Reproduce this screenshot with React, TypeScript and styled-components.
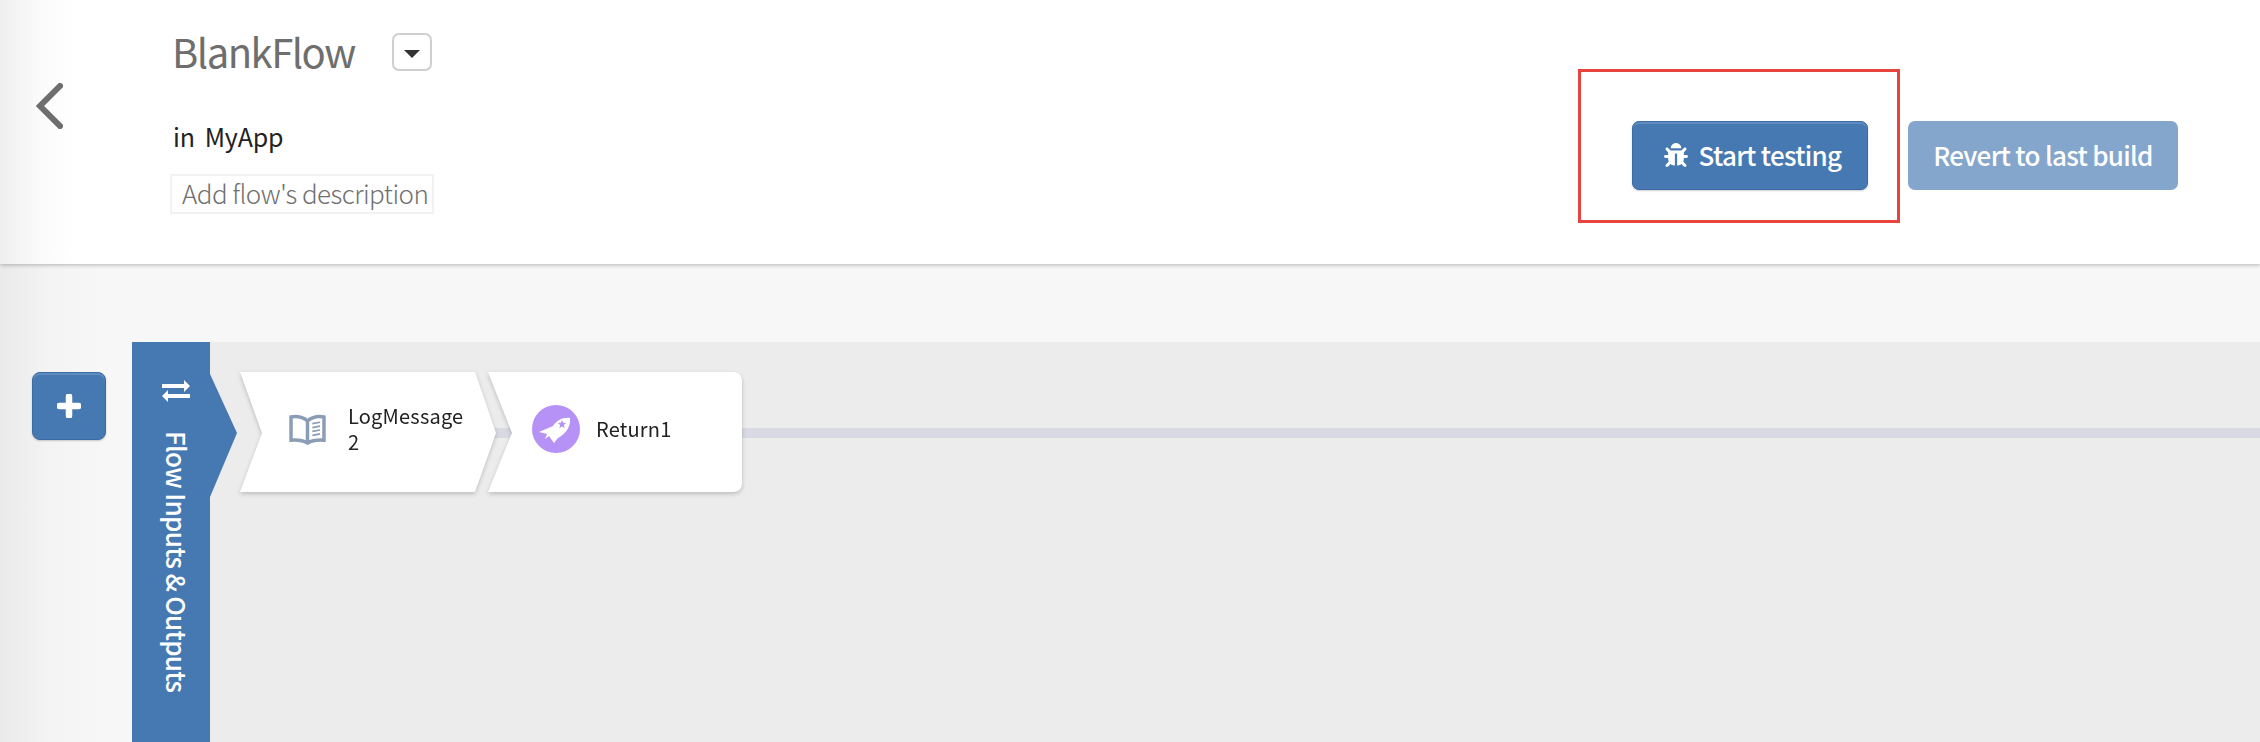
import React from "react";
import styled, { createGlobalStyle } from "styled-components";
import { FaBug } from "react-icons/fa";

const Global = createGlobalStyle`
  html, body { margin: 0; padding: 0; background: #fff; }
  body { font-family: "Noto Sans CJK JP", "Noto Sans", sans-serif; overflow: hidden; }
`;
const Page = styled.div`
  width: 2260px; height: 742px; display: flex; flex-direction: column; overflow: hidden;
`;
const Header = styled.header`
  height: 264px; flex: none; box-sizing: border-box; display: flex; position: relative; z-index: 1;
  background: linear-gradient(90deg, #efefef 0, #fbfbfb 40px, #ffffff 80px);
  box-shadow: 0 1px 4px rgba(0,0,0,.28);
`;
const Back = styled.div`
  width: 170px; flex: none; box-sizing: border-box; padding: 83px 0 0 35px;
`;
const Info = styled.div`
  display: flex; flex-direction: column; align-items: flex-start; padding-top: 22px;
`;
const TitleRow = styled.div`
  display: flex; align-items: center; padding-left: 2px; height: 58px; gap: 37px;
`;
const Title = styled.h1`
  margin: 0; font-size: 40px; font-weight: 400; line-height: 58px; color: #6e6e6e; letter-spacing: -1.5px;
`;
const Caret = styled.button`
  width: 40px; height: 38px; padding: 0; background: #fff; border: 2px solid #cfcfcf; border-radius: 7px;
  display: flex; align-items: center; justify-content: center; margin-top: 2px;
  &::after { content: ""; margin-top: 3px; border: 8px solid transparent; border-top-color: #333; border-bottom: 0; }
`;
const AppLine = styled.div`
  display: flex; gap: 10px; padding-left: 3px; margin-top: 38px; font-size: 25px; line-height: 36px; color: #222; letter-spacing: -.2px;
`;
const Desc = styled.div`
  margin-top: 20px; box-sizing: border-box; width: 264px; height: 40px; border: 2px solid #f2f2f2;
  padding-left: 10px; font-size: 26px; font-weight: 300; line-height: 34px; color: #707070; white-space: nowrap; letter-spacing: -.55px;
`;
const Actions = styled.div`
  margin-left: auto; display: flex; align-items: flex-start; padding: 69px 82px 0 0;
`;
const RedFrame = styled.div`
  box-sizing: border-box; width: 322px; height: 154px; border: 3px solid #e8443f; padding: 49px 0 0 51px;
`;
const Btn = styled.button<{ $faded?: boolean }>`
  height: 69px; box-sizing: border-box; display: flex; align-items: center; justify-content: center; gap: 11px;
  font-family: inherit; font-size: 26px; font-weight: 500; color: #fff; border-radius: 7px; letter-spacing: -.7px;
  padding: 0 0 2px ${(p) => (p.$faded ? "0" : "5px")};
  width: ${(p) => (p.$faded ? "270px" : "236px")};
  margin: ${(p) => (p.$faded ? "52px 0 0 8px" : "0")};
  background: ${(p) => (p.$faded ? "#85a6cc" : "#4678b2")};
  border: ${(p) => (p.$faded ? "0" : "1px solid #3c6ba3")};
  box-shadow: ${(p) => (p.$faded ? "none" : "inset 0 2px 0 #5f8cc0, 0 1px 2px rgba(0,0,0,.2)")};
`;
const Band = styled.main`
  flex: 1; display: flex; flex-direction: column; min-height: 0;
  background: linear-gradient(90deg, #eaeaea 0, #f4f4f4 50px, #f7f7f7 100px);
`;
const Spacer = styled.div`height: 78px; flex: none;`;
const Workspace = styled.div`flex: 1; display: flex; min-height: 0;`;
const Gutter = styled.div`width: 132px; flex: none; box-sizing: border-box; padding: 30px 0 0 32px;`;
const Add = styled.button`
  width: 74px; height: 68px; padding: 0; background: #4678b2; border: 1px solid #3c6ba3; border-radius: 8px;
  display: flex; align-items: center; justify-content: center;
  box-shadow: inset 0 2px 0 #5f8cc0, 0 1px 2px rgba(0,0,0,.2);
`;
const Canvas = styled.div`flex: 1; display: flex; background: #ececec; min-width: 0;`;
const Side = styled.div`
  width: 105px; flex: none; box-sizing: border-box; background: #4678b2; color: #fff;
  clip-path: polygon(0 0, 78px 0, 78px 32px, 105px 91px, 78px 155px, 78px 100%, 0 100%);
  display: flex; flex-direction: column; align-items: flex-start; padding: 38px 0 0 30px;
`;
const SideText = styled.div`
  writing-mode: vertical-rl; font-size: 26px; font-weight: 500; line-height: 28px; white-space: nowrap; margin-top: 29px; margin-left: 1px; letter-spacing: -.7px;
`;
const Rail = styled.div`
  flex: 1; margin-left: 3px; padding-top: 30px; display: flex; align-items: flex-start;
  background: linear-gradient(#d9d9e3, #d9d9e3) no-repeat 100px 86px / 100% 10px;
`;
const Step = styled.div<{ $first?: boolean }>`
  flex: none; filter: drop-shadow(0 2px 2px rgba(0,0,0,.2));
  margin-left: ${(p) => (p.$first ? "0" : "-8px")};
  width: ${(p) => (p.$first ? "256px" : "254px")};
`;
const StepBody = styled.div<{ $first?: boolean }>`
  height: 120px; box-sizing: border-box; background: #fff; display: flex; align-items: center; color: #222;
  font-size: 20px; line-height: 26px;
  ${(p) =>
    p.$first
      ? `clip-path: polygon(0 0, 235px 0, 256px 61px, 235px 120px, 0 120px, 22px 61px); padding: 0 30px 6px 49px; gap: 22px;`
      : `clip-path: polygon(0 0, 246px 0, 250px 1px, 253px 4px, 254px 8px, 254px 112px, 253px 116px, 250px 119px, 246px 120px, 0 120px, 24px 61px); padding: 0 30px 6px 44px; gap: 16px;`}
`;
const Purple = styled.span`
  width: 48px; height: 48px; border-radius: 50%; background: #b692f6; flex: none;
  display: flex; align-items: center; justify-content: center;
`;
const Label = styled.span`display: block; width: 125px; letter-spacing: .2px;`;
const BookSvg = styled.svg`flex: none;`;

const Chevron = () => (
  <svg width="28" height="46" viewBox="0 0 28 46">
    <path d="M25 3 L5 23 L25 43" fill="none" stroke="#6e6e6e" strokeWidth="6" strokeLinecap="square" />
  </svg>
);
const Plus = () => (
  <svg width="24" height="24" viewBox="0 0 24 24">
    <path d="M12 2.5v19M2.5 12h19" stroke="#fff" strokeWidth="6.5" strokeLinecap="round" />
  </svg>
);
const Transfer = () => (
  <svg width="28" height="22" viewBox="0 0 28 22" fill="#fff">
    <path d="M0 4h22V0l6 6-6 6V8H0zM28 14v4H6v4L0 16l6-6v4z" />
  </svg>
);
const Book = () => (
  <BookSvg width="37" height="31" viewBox="0 0 38 32">
    <path d="M2 3 C8 2 14 3 19 7 C24 3 30 2 36 3 V27 C30 26.5 24 27 19 30 C14 27 8 26.5 2 27 Z M19 7 V30" fill="none" stroke="#8b9db5" strokeWidth="3.6" />
    <path d="M24 10l8-1.5M24 14l8-1.5M24 18l8-1.5M24 22l8-1.5" stroke="#8b9db5" strokeWidth="1.8" />
  </BookSvg>
);
const Rocket = () => (
  <svg width="38" height="38" viewBox="0 0 38 38">
    <path fill="#fff" d="M33 8 C26 7 20 10 16 16 L2 22 L10 24 L8 29 L12 26 L17 33 L21 28 C29 24 34 16 33 8 Z" />
    <path fill="#b692f6" d="M25 10l1.2 2.8 3 .3-2.3 2 .7 3-2.6-1.6-2.6 1.6.7-3-2.3-2 3-.3z" />
  </svg>
);

export default function App() {
  return (
    <Page>
      <Global />
      <Header>
        <Back><Chevron /></Back>
        <Info>
          <TitleRow>
            <Title>BlankFlow</Title>
            <Caret aria-label="Flow menu" />
          </TitleRow>
          <AppLine><span>in</span><span>MyApp</span></AppLine>
          <Desc>Add flow's description</Desc>
        </Info>
        <Actions>
          <RedFrame>
            <Btn><FaBug size={24} />Start testing</Btn>
          </RedFrame>
          <Btn $faded>Revert to last build</Btn>
        </Actions>
      </Header>
      <Band>
        <Spacer />
        <Workspace>
          <Gutter><Add aria-label="Add"><Plus /></Add></Gutter>
          <Canvas>
            <Side>
              <Transfer />
              <SideText>Flow Inputs &amp; Outputs</SideText>
            </Side>
            <Rail>
              <Step $first>
                <StepBody $first><Book /><Label>LogMessage 2</Label></StepBody>
              </Step>
              <Step>
                <StepBody><Purple><Rocket /></Purple><Label>Return1</Label></StepBody>
              </Step>
            </Rail>
          </Canvas>
        </Workspace>
      </Band>
    </Page>
  );
}
